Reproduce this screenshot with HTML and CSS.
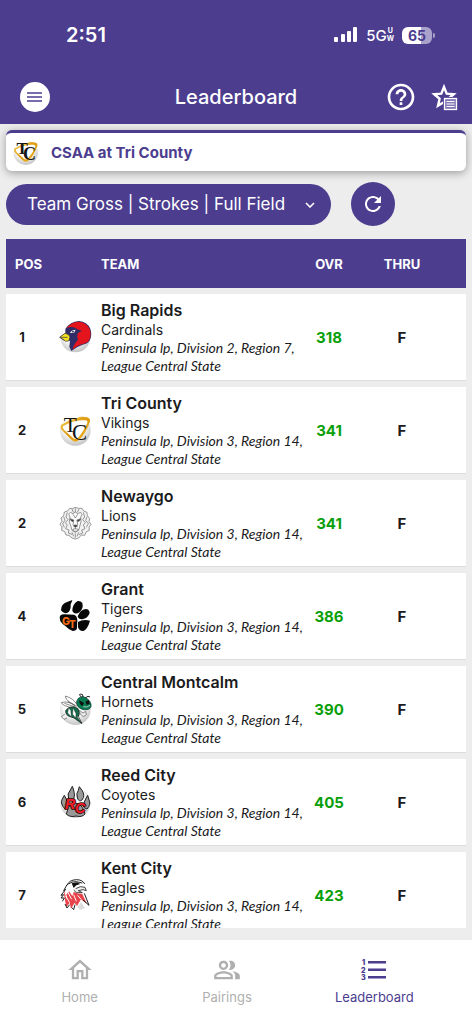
FILE: index.html
```html
<!DOCTYPE html>
<html lang="en">
<head>
    <meta charset="UTF-8">
    <meta name="viewport" content="width=device-width, initial-scale=1.0">
    <title>Leaderboard</title>
    <link rel="stylesheet" href="styles.css">
</head>
<body>
    <header class="header">
        <div class="status">
            <span class="time">2:51</span>
            <div class="status-right">
                <svg width="24" height="16" viewBox="0 0 24 16" fill="#fff">
                    <rect x="0" y="10" width="4" height="5" rx="1"/>
                    <rect x="7" y="7" width="4" height="8" rx="1"/>
                    <rect x="13" y="4" width="4" height="11" rx="1"/>
                    <rect x="19" y="0" width="4" height="15" rx="1"/>
                </svg>
                <span class="network">5G<span class="uw"><span>U</span><span>W</span></span></span>
                <span class="battery"><span class="battery-level">65</span></span>
            </div>
        </div>
        <div class="app-bar">
            <button class="menu-btn" aria-label="Menu">
                <svg width="16" height="12" viewBox="0 0 16 12" fill="none" stroke="#4c3d8f" stroke-width="1.7">
                    <path d="M0 2h15M0 6h15M0 10h15"/>
                </svg>
            </button>
            <h1 class="title">Leaderboard</h1>
            <div class="actions">
                <button class="icon-btn" aria-label="Help">
                    <svg width="32" height="32" viewBox="0 0 24 24" fill="#fff"><path d="M11 18h2v-2h-2v2zm1-16C6.48 2 2 6.48 2 12s4.48 10 10 10 10-4.48 10-10S17.52 2 12 2zm0 18c-4.41 0-8-3.59-8-8s3.59-8 8-8 8 3.59 8 8-3.59 8-8 8zm0-14c-2.21 0-4 1.79-4 4h2c0-1.1.9-2 2-2s2 .9 2 2c0 2-3 1.75-3 5h2c0-2.25 3-2.5 3-5 0-2.21-1.79-4-4-4z"/></svg>
                </button>
                <button class="icon-btn" aria-label="Favorites">
                    <svg width="28" height="28" viewBox="0 0 28 28">
                        <path d="M13 4 L15.7 10.6 L22.8 11.2 L17.4 15.8 L19 22.8 L13 19.1 L7 22.8 L8.6 15.8 L3.2 11.2 L10.3 10.6Z" fill="none" stroke="#fff" stroke-width="2.4"/>
                        <rect x="12" y="14" width="15" height="14" fill="#4c3d8f"/>
                        <rect x="13.5" y="15.5" width="12" height="11" fill="#8378b5" stroke="#fff" stroke-width="1.3"/>
                        <path d="M15.5 18.5h8M15.5 21h8M15.5 23.5h8" stroke="#fff" stroke-width="1.2"/>
                    </svg>
                </button>
            </div>
        </div>
    </header>

    <main class="main">
        <a href="#" class="event">
            <svg class="event-logo" viewBox="25 39 102 102">
                <defs>
                    <radialGradient id="ball" cx="45%" cy="35%" r="65%">
                        <stop offset="0.5" stop-color="#fff"/>
                        <stop offset="1" stop-color="#c4c4c4"/>
                    </radialGradient>
                    <linearGradient id="gold" x1="0" y1="0" x2="1" y2="1">
                        <stop offset="0" stop-color="#f6cf55"/>
                        <stop offset="0.5" stop-color="#dd9a10"/>
                        <stop offset="1" stop-color="#f3b62c"/>
                    </linearGradient>
                </defs>
                <g id="tri-county">
                    <circle cx="77" cy="91" r="46" fill="url(#ball)"/>
                    <path d="M34 75 Q30 83 37 91 L66 120 Q77 130 87 121 Q106 104 121 65 Q123 55 112 52 Q97 48 82 54 Q56 60 34 75Z" fill="url(#gold)"/>
                    <path d="M40 79 Q38 84 43 89 L70 114 Q77 120 85 113 Q101 96 113 69 Q115 62 107 61 Q73 57 40 79Z" fill="#fff"/>
                    <g font-family="Liberation Serif, serif" fill="#161616">
                        <text x="42" y="96" font-size="64">T</text>
                        <text x="67" y="120" font-size="68">C</text>
                    </g>
                </g>
            </svg>
            <span>CSAA at Tri County</span>
        </a>

        <div class="toolbar">
            <div class="picker">
                <select aria-label="Leaderboard view">
                    <option>Team Gross | Strokes | Full Field</option>
                </select>
                <svg class="chevron" width="10" height="6" viewBox="0 0 10 6" fill="none" stroke="#fff" stroke-width="1.6"><path d="M1 1l4 4 4-4"/></svg>
            </div>
            <button class="refresh" aria-label="Refresh">
                <svg width="24" height="24" viewBox="0 0 24 24" fill="#fff"><path d="M17.65 6.35C16.2 4.9 14.21 4 12 4c-4.42 0-7.99 3.58-7.99 8s3.57 8 7.99 8c3.73 0 6.84-2.55 7.73-6h-2.08c-.82 2.33-3.04 4-5.65 4-3.31 0-6-2.69-6-6s2.69-6 6-6c1.66 0 3.14.69 4.22 1.78L13 11h7V4l-2.35 2.35z"/></svg>
            </button>
        </div>

        <div class="scroller">
            <table class="board">
                <colgroup>
                    <col class="col-pos">
                    <col class="col-logo">
                    <col>
                    <col class="col-ovr">
                    <col class="col-thru">
                    <col class="col-end">
                </colgroup>
                <thead>
                    <tr>
                        <th class="th-pos" colspan="2">POS</th>
                        <th class="th-team">TEAM</th>
                        <th>OVR</th>
                        <th>THRU</th>
                        <th></th>
                    </tr>
                </thead>
                <tbody>
                    <tr>
                        <td class="pos">1</td>
                        <td class="logo">
                            <svg viewBox="25 39 102 102">
                                <circle cx="77" cy="91" r="45" fill="url(#ball)"/>
                                <path d="M47 66 Q61 44 88 42 Q112 44 122 65 Q128 83 121 99 Q114 111 99 113 Q82 118 65 132 L59 119 L61 101 L44 102 L30 91 L47 78Z" fill="#2f2c67"/>
                                <path d="M50 64 Q64 45 88 44 Q111 47 120 66 Q126 83 119 98 Q112 109 98 111 Q83 115 69 127 Q72 111 85 99 Q81 90 84 79 L97 71 Q83 68 76 62 Q63 57 50 64Z" fill="#e3141c"/>
                                <path d="M46 79 Q58 81 61 90 L57 102 Q45 105 42 98 L30 91Z" fill="#f6e31c" stroke="#2a2850" stroke-width="2"/>
                                <path d="M32 91 L54 91" stroke="#2a2850" stroke-width="2"/>
                                <path d="M60 77 Q67 68 78 68 L73 78Z" fill="#fff"/>
                                <circle cx="70" cy="74" r="2.5" fill="#16163a"/>
                            </svg>
                        </td>
                        <td class="team">
                            <div class="name">Big Rapids</div>
                            <div class="mascot">Cardinals</div>
                            <div class="detail">Peninsula lp, Division 2, Region 7, League Central State</div>
                        </td>
                        <td class="ovr">318</td>
                        <td class="thru">F</td>
                        <td></td>
                    </tr>
                    <tr>
                        <td class="pos">2</td>
                        <td class="logo"><svg viewBox="25 39 102 102"><use href="#tri-county"/></svg></td>
                        <td class="team">
                            <div class="name">Tri County</div>
                            <div class="mascot">Vikings</div>
                            <div class="detail">Peninsula lp, Division 3, Region 14, League Central State</div>
                        </td>
                        <td class="ovr">341</td>
                        <td class="thru">F</td>
                        <td></td>
                    </tr>
                    <tr>
                        <td class="pos">2</td>
                        <td class="logo">
                            <svg viewBox="25 35 102 102" fill="none" stroke="#666" stroke-width="2" stroke-linejoin="round">
                                <path d="M76 39 L87 42 L97 42 L102 50 L112 54 L113 64 L120 73 L118 81 L124 91 L118 98 L119 108 L110 112 L105 123 L95 122 L87 131 L77 134 L67 131 L58 123 L49 122 L45 112 L36 108 L37 98 L31 90 L37 81 L34 71 L42 64 L44 53 L54 50 L60 42 L69 43Z" fill="#f2f2f2"/>
                                <path d="M57 59 L62 54 L70 58 L77 53 L84 58 L93 54 L97 61 L93 68 L94 82 L90 97 L87 108 L77 114 L67 108 L64 97 L59 82 L61 68Z" fill="#fafafa"/>
                                <path d="M61 73 L72 77 L70 82 L64 79Z M93 73 L82 77 L84 82 L90 79Z M71 95 L77 99 L84 95 L80 92 L74 92Z" fill="#333"/>
                                <path d="M72 77 L70 92 M82 77 L84 92 M77 99 L77 105 M69 105 L77 103 L86 105 L81 111 L73 111Z M70 60 L77 71 L84 60 M77 42 L77 54 M67 44 L71 54 M88 44 L83 54"/>
                                <path d="M53 54 L49 68 L55 76 L47 85 L53 92 L48 103 L58 107 L56 116 L67 120 M101 54 L105 68 L99 76 L107 85 L101 92 L106 103 L96 107 L99 116 L87 121 M42 67 L46 78 L39 88 L44 99 M112 67 L108 78 L116 88 L110 99 M67 114 L72 126 M87 114 L82 126 M77 117 L77 130"/>
                            </svg>
                        </td>
                        <td class="team">
                            <div class="name">Newaygo</div>
                            <div class="mascot">Lions</div>
                            <div class="detail">Peninsula lp, Division 3, Region 14, League Central State</div>
                        </td>
                        <td class="ovr">341</td>
                        <td class="thru">F</td>
                        <td></td>
                    </tr>
                    <tr>
                        <td class="pos">4</td>
                        <td class="logo">
                            <svg viewBox="25 36 102 102">
                                <path d="M30 91 Q31 82 43 82 L73 83 Q82 86 83 98 L82 124 Q80 132 69 132 Q58 129 48 118 Q39 113 32 103Z" fill="#080808"/>
                                <path d="M34 70 Q34 50 52 45 L68 39 Q66 47 63 52 Q64 67 57 75 Q43 84 34 70Z M68 72 Q68 51 84 42 Q93 41 98 48 Q102 65 90 75 Q76 86 68 72Z M84 88 Q91 69 108 66 Q119 66 120 78 Q115 94 98 97 Q86 98 84 88Z M85 105 Q99 96 121 101 Q114 126 101 132 Q89 133 85 121Z" fill="#080808"/>
                                <g fill="#f36b16" font-family="Inter, sans-serif" font-weight="800">
                                    <text x="37" y="113" font-size="32">G</text>
                                    <text x="58" y="124" font-size="30">T</text>
                                </g>
                            </svg>
                        </td>
                        <td class="team">
                            <div class="name">Grant</div>
                            <div class="mascot">Tigers</div>
                            <div class="detail">Peninsula lp, Division 3, Region 14, League Central State</div>
                        </td>
                        <td class="ovr">386</td>
                        <td class="thru">F</td>
                        <td></td>
                    </tr>
                    <tr>
                        <td class="pos">5</td>
                        <td class="logo">
                            <svg viewBox="25 36 102 102" stroke-linejoin="round">
                                <circle cx="77" cy="89" r="46" fill="url(#ball)"/>
                                <g fill="#fff" stroke="#555" stroke-width="2">
                                    <path d="M83 75 Q72 55 47 48 Q46 57 59 66 L80 79Z"/>
                                    <path d="M76 78 Q55 61 35 68 Q39 79 74 84Z"/>
                                    <path d="M54 64 L77 76 M44 70 L71 79"/>
                                </g>
                                <path d="M72 80 Q54 80 48 92 Q47 105 61 110 L73 114 L97 131 L86 110 Q94 98 84 85Z" fill="#166b4a" stroke="#111" stroke-width="2"/>
                                <path d="M57 84 L54 99 L65 110 L63 91Z M70 84 L69 103 L78 114 L79 101Z M81 109 L96 129 L86 110Z" fill="#fff" stroke="#222" stroke-width="1"/>
                                <path d="M80 68 Q84 49 101 50 Q118 55 124 72 Q127 86 112 89 Q95 91 85 80Z" fill="#087b51" stroke="#10372b" stroke-width="2"/>
                                <path d="M96 52 Q90 48 90 42 M100 51 Q101 41 92 42 M107 54 Q116 45 121 51" fill="none" stroke="#222" stroke-width="3"/>
                                <path d="M89 61 L103 69 L98 78 Q88 74 89 61Z M108 64 L118 60 L120 72 L110 74Z" fill="#111"/>
                                <path d="M101 80 Q112 84 121 76" fill="none" stroke="#eee" stroke-width="2"/>
                                <path d="M89 91 L100 99 L108 94 L110 104 L101 110 L91 101Z M45 103 L35 110 L43 118 L52 114" fill="#eee" stroke="#555" stroke-width="2"/>
                            </svg>
                        </td>
                        <td class="team">
                            <div class="name">Central Montcalm</div>
                            <div class="mascot">Hornets</div>
                            <div class="detail">Peninsula lp, Division 3, Region 14, League Central State</div>
                        </td>
                        <td class="ovr">390</td>
                        <td class="thru">F</td>
                        <td></td>
                    </tr>
                    <tr>
                        <td class="pos">6</td>
                        <td class="logo">
                            <svg viewBox="25 34 102 102" stroke-linejoin="round">
                                <circle cx="77" cy="88" r="45" fill="url(#ball)"/>
                                <g fill="#999" stroke="#222" stroke-width="3">
                                    <path d="M56 102 Q61 91 77 88 Q94 91 99 103 L106 121 Q97 132 79 127 Q61 132 50 121Z"/>
                                    <path d="M68 38 L72 49 Q77 64 72 78 Q65 87 57 75 Q51 60 62 49Z"/>
                                    <path d="M89 39 L97 50 Q107 66 98 78 Q88 87 83 73 Q79 58 86 50Z"/>
                                    <path d="M44 65 L50 76 Q56 89 54 104 L46 106 Q31 90 37 78Z"/>
                                    <path d="M114 65 L118 79 Q125 91 112 106 L103 102 Q99 89 108 76Z"/>
                                </g>
                                <g fill="#f0202a" stroke="#300" stroke-width="5" paint-order="stroke" font-family="Liberation Sans, sans-serif" font-weight="700" font-style="italic" font-size="43">
                                    <text x="46" y="105">R</text>
                                    <text x="76" y="117">C</text>
                                </g>
                            </svg>
                        </td>
                        <td class="team">
                            <div class="name">Reed City</div>
                            <div class="mascot">Coyotes</div>
                            <div class="detail">Peninsula lp, Division 3, Region 14, League Central State</div>
                        </td>
                        <td class="ovr">405</td>
                        <td class="thru">F</td>
                        <td></td>
                    </tr>
                    <tr>
                        <td class="pos">7</td>
                        <td class="logo">
                            <svg viewBox="25 42 102 102" stroke-linejoin="round">
                                <path d="M54 62 Q58 48 80 47 Q99 47 105 60 L110 78 L100 86 L118 124 L104 116 L88 138 L80 122 L69 138 L64 126 L50 132 L36 112 L34 98 L40 84 L46 72Z" fill="#fff"/>
                                <path d="M44 78 Q42 92 46 108 L50 130 L60 116 L64 134 L75 116 L82 126 L94 106 L112 120 L98 90 Q84 90 72 84 L68 96 L58 82 L50 92Z" fill="#e8424a"/>
                                <path d="M54 84 L66 106 M48 96 L60 116 M72 92 L80 112 M84 94 L94 106 M46 84 L52 104" fill="none" stroke="#fff" stroke-width="3"/>
                                <path d="M52 64 Q58 48 80 47 Q99 47 105 60 M56 60 Q66 52 80 53 L98 57" fill="none" stroke="#222" stroke-width="3"/>
                                <path d="M66 58 L82 55 L92 60 L80 64 L72 72Z" fill="#111"/>
                                <path d="M78 74 Q92 64 106 70 L110 80 L100 77 L86 80 L98 86 L80 86 L72 78" fill="#eee" stroke="#222" stroke-width="2.5"/>
                                <path d="M52 62 L42 80 L48 76 L34 94 L42 92 L34 102 L44 102 L38 112 M46 120 L52 132 L60 122 M66 130 L72 137 L76 122 M104 88 L118 124 L100 108" fill="none" stroke="#222" stroke-width="3"/>
                                <path d="M84 128 L94 114 L106 132 L90 138Z" fill="#ddd"/>
                            </svg>
                        </td>
                        <td class="team">
                            <div class="name">Kent City</div>
                            <div class="mascot">Eagles</div>
                            <div class="detail">Peninsula lp, Division 3, Region 14, League Central State</div>
                        </td>
                        <td class="ovr">423</td>
                        <td class="thru">F</td>
                        <td></td>
                    </tr>
                </tbody>
            </table>
        </div>
    </main>

    <nav class="nav">
        <a href="#" class="nav-item">
            <svg width="28" height="28" viewBox="0 0 24 24" fill="currentColor"><path d="M12 5.69l5 4.5V18h-2v-6H9v6H7v-7.81l5-4.5M12 3L2 12h3v8h6v-6h2v6h6v-8h3L12 3z"/></svg>
            <span>Home</span>
        </a>
        <a href="#" class="nav-item">
            <svg width="28" height="28" viewBox="0 0 24 24" fill="currentColor"><path d="M16.67 13.13C18.04 14.06 19 15.32 19 17v3h4v-3c0-2.18-3.57-3.47-6.33-3.87zM15 12c2.21 0 4-1.79 4-4s-1.79-4-4-4c-.47 0-.91.1-1.33.24C14.5 5.27 15 6.58 15 8s-.5 2.73-1.33 3.76c.42.14.86.24 1.33.24zM9 12c2.21 0 4-1.79 4-4s-1.79-4-4-4-4 1.79-4 4 1.79 4 4 4zm0-6c1.1 0 2 .9 2 2s-.9 2-2 2-2-.9-2-2 .9-2 2-2zM9 13c-2.67 0-8 1.34-8 4v3h16v-3c0-2.66-5.33-4-8-4zm6 5H3v-.99C3.2 16.29 6.3 15 9 15s5.8 1.29 6 2v1z"/></svg>
            <span>Pairings</span>
        </a>
        <a href="#" class="nav-item active">
            <svg width="28" height="28" viewBox="0 0 28 28" fill="currentColor">
                <path d="M8 5h18v2.500H8zM8 12.500h18v2.500H8zM8 20h18v2.500H8z"/>
                <g font-family="Inter, sans-serif" font-weight="900" font-size="7">
                    <text x="2" y="9">1</text>
                    <text x="1" y="17">2</text>
                    <text x="1" y="24">3</text>
                </g>
            </svg>
            <span>Leaderboard</span>
        </a>
    </nav>
</body>
</html>
```
FILE: styles.css
```css
* {
    margin: 0;
    padding: 0;
    box-sizing: border-box;
}
body {
    height: 100vh;
    display: flex;
    flex-direction: column;
    background-color: #ededed;
    color: #1b1b1d;
    font-family: Inter, "Liberation Sans", sans-serif;
    overflow: hidden;
}
svg {
    display: block;
}
button {
    border: none;
    background: none;
    cursor: pointer;
}
a {
    text-decoration: none;
}

/* header */
.header {
    background-color: #4c3d8f;
    color: #fff;
}
.status {
    height: 70px;
    padding: 0 40px 0 66px;
    display: flex;
    justify-content: space-between;
    align-items: center;
}
.time {
    font-size: 20px;
    font-weight: 600;
}
.status-right {
    display: flex;
    align-items: center;
    gap: 8px;
}
.network {
    display: flex;
    align-items: center;
    font-size: 15px;
    font-weight: 500;
}
.uw {
    display: flex;
    flex-direction: column;
    align-items: center;
    font-size: 7px;
    line-height: 8px;
    font-weight: 700;
}
.battery {
    width: 30px;
    height: 17px;
    border-radius: 6px;
    background: linear-gradient(to right, #fff 65%, #aaa2cb 65%);
    color: #4c3d8f;
    text-align: center;
    position: relative;
}
.battery::after {
    content: "";
    position: absolute;
    right: -3px;
    top: 6px;
    width: 2px;
    height: 5px;
    border-radius: 0 2px 2px 0;
    background-color: #aaa2cb;
}
.battery-level {
    display: block;
    font-size: 14px;
    line-height: 17px;
    font-weight: 700;
}
.app-bar {
    height: 54px;
    padding: 0 13px;
    display: grid;
    grid-template-columns: 1fr auto 1fr;
    align-items: center;
}
.menu-btn {
    width: 30px;
    height: 30px;
    margin-left: 7px;
    border-radius: 50%;
    background-color: #fff;
    display: flex;
    justify-content: center;
    align-items: center;
}
.title {
    font-size: 20px;
    font-weight: 500;
}
.actions {
    display: flex;
    justify-content: flex-end;
    align-items: center;
    gap: 14px;
}

/* content */
.main {
    flex: 1;
    min-height: 0;
    padding: 6px 6px 12px;
    display: flex;
    flex-direction: column;
}
.event {
    height: 41px;
    padding: 0 6px;
    display: flex;
    align-items: center;
    gap: 12px;
    border-top: 3px solid #4c3d8f;
    border-radius: 6px;
    background-color: #fff;
    box-shadow: 0 2px 8px rgba(0, 0, 0, 0.35);
    color: #4c3d8f;
    font-size: 15px;
    font-weight: 700;
}
.event-logo {
    width: 27px;
    height: 27px;
}
.toolbar {
    margin-top: 11px;
    display: flex;
    align-items: center;
    gap: 20px;
}
.picker {
    position: relative;
    width: 325px;
}
.picker select {
    width: 100%;
    height: 41px;
    padding: 0 40px 0 21px;
    appearance: none;
    border: none;
    border-radius: 21px;
    background-color: #4c3d8f;
    color: #fff;
    font-family: inherit;
    font-size: 17px;
}
.chevron {
    position: absolute;
    right: 16px;
    top: 18px;
    pointer-events: none;
}
.refresh {
    width: 44px;
    height: 44px;
    border-radius: 50%;
    background-color: #4c3d8f;
    display: flex;
    justify-content: center;
    align-items: center;
}

/* leaderboard */
.scroller {
    flex: 1;
    min-height: 0;
    margin-top: 7px;
    overflow: hidden;
}
.board {
    width: 100%;
    table-layout: fixed;
    border-collapse: separate;
    border-spacing: 0 6px;
}
.col-pos {
    width: 32px;
}
.col-logo {
    width: 63px;
}
.col-ovr {
    width: 48px;
}
.col-thru {
    width: 98px;
}
.col-end {
    width: 15px;
}
.board th {
    height: 49px;
    background-color: #4c3d8f;
    color: #fff;
    font-size: 13px;
    font-weight: 700;
}
.board .th-pos {
    padding-left: 9px;
    text-align: left;
}
.board .th-team {
    text-align: left;
}
.board td {
    height: 87px;
    background-color: #fff;
    border-bottom: 1px solid #dcdcdc;
    vertical-align: middle;
}
.pos {
    text-align: center;
    font-size: 13px;
    font-weight: 700;
}
.logo svg {
    width: 34px;
    height: 34px;
    margin-left: 20px;
}
.name {
    font-size: 16px;
    line-height: 20px;
    font-weight: 600;
}
.mascot {
    font-size: 14px;
    line-height: 19px;
}
.detail {
    font-family: Lato, "Open Sans", sans-serif;
    font-size: 14px;
    line-height: 18px;
    font-style: italic;
}
.ovr,
.thru {
    text-align: center;
    font-size: 15px;
    font-weight: 700;
}
.ovr {
    color: #0a9f0a;
}

/* bottom nav */
.nav {
    height: 84px;
    padding: 16px 24px 0 6px;
    display: flex;
    background-color: #fff;
}
.nav-item {
    flex: 1;
    display: flex;
    flex-direction: column;
    align-items: center;
    gap: 4px;
    color: #afafaf;
    font-size: 13px;
    line-height: 18px;
}
.nav-item.active {
    color: #4c3d8f;
}
```
